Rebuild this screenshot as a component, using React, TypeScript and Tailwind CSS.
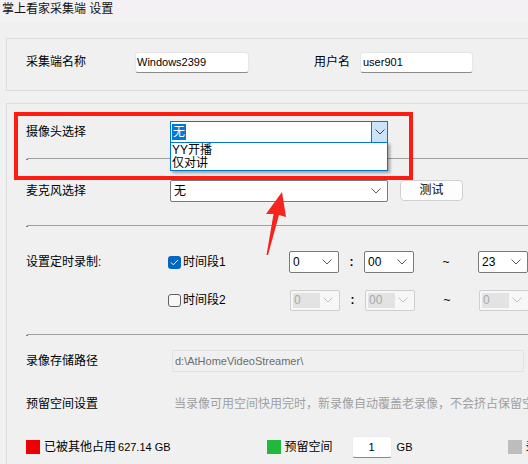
import React from 'react'

const Chevron = ({ color = '#5a5a5a' }: { color?: string }) => (
  <svg width="10" height="6" viewBox="0 0 10 6" fill="none">
    <polyline points="0.5,0.5 5,5 9.5,0.5" stroke={color} strokeWidth="1" />
  </svg>
)

function Combo({ value, w, disabled = false }: { value: string; w: string; disabled?: boolean }) {
  if (disabled) {
    return (
      <div className={`${w} h-[21px] flex items-center border border-[#cfcfcf] bg-[#f7f7f7] rounded-[2px] pl-[2px] pr-[6px]`}>
        <span className="h-[15px] w-[27px] bg-[#e3e3e3] text-[#a8a8a8] text-[12px] leading-[15px] pl-[1px]">{value}</span>
        <span className="ml-auto"><Chevron color="#c0c0c0" /></span>
      </div>
    )
  }
  return (
    <div className={`${w} h-[22px] flex items-center border border-[#7a7a7a] bg-white rounded-[2px] pl-[3px] pr-[6px]`}>
      <span className="text-[12px] leading-[20px] text-black">{value}</span>
      <span className="ml-auto"><Chevron /></span>
    </div>
  )
}

function Separator() {
  return (
    <div className="relative h-px">
      <div className="ml-px h-px bg-[#a0a0a0]" />
      <div className="absolute left-0 top-px w-[2px] h-px bg-[#7a7a7a]" />
    </div>
  )
}

function CheckBox({ checked }: { checked: boolean }) {
  if (checked) {
    return (
      <div className="w-[13px] h-[13px] rounded-[3px] bg-[#0067c0] flex items-center justify-center">
        <svg width="9" height="7" viewBox="0 0 9 7" fill="none">
          <polyline points="1,3.5 3.3,5.8 8,1" stroke="#ffffff" strokeWidth="1" />
        </svg>
      </div>
    )
  }
  return <div className="w-[13px] h-[13px] rounded-[3px] border border-[#5f5f5f] bg-[#f7f7f7]" />
}

export default function App() {
  return (
    <div className="relative w-[528px] h-[464px] overflow-hidden bg-[#f0f0f0] text-black font-['Liberation_Sans','Noto_Sans_CJK_SC',sans-serif] whitespace-nowrap">
      {/* title bar */}
      <div className="h-[22px] bg-[#f3f1f4] pl-[2px] text-[12px] leading-[18px] text-[#111]">掌上看家采集端 设置</div>

      {/* group 1 */}
      <div className="mt-[16px] ml-[6px] w-[600px] h-[53px] border-t border-l border-b border-[#dcdcdc] pl-[19px] pt-[13px] flex items-start">
        <span className="w-[109px] text-[12px] leading-[21px]">采集端名称</span>
        <div className="w-[114px] h-[21px] bg-white border border-[#e6e6e6] border-b-[#8a8a8a] rounded-[3px] pl-[1px] text-[11px] leading-[19px]">Windows2399</div>
        <span className="ml-[65px] w-[46px] text-[12px] leading-[21px]">用户名</span>
        <div className="w-[113px] h-[21px] bg-white border border-[#e6e6e6] border-b-[#8a8a8a] rounded-[3px] pl-[2px] text-[11px] leading-[19px]">user901</div>
      </div>

      {/* group 2 */}
      <div className="mt-[12px] ml-[6px] w-[640px] h-[400px] border-t border-l border-[#dcdcdc] pl-[19px] flex flex-col">
        {/* camera */}
        <div className="mt-[17px] h-[22px] flex items-center">
          <span className="w-[144px] text-[12px]">摄像头选择</span>
          <div className="relative w-[218px] h-[22px] flex items-center border border-[#0078d7] bg-white pl-[1px]">
            <span className="bg-[#0078d7] text-white text-[12px] leading-[16px] px-px">无</span>
            <div className="ml-auto h-full w-[16px] border-l border-[#0078d7] bg-[#cce4f7] flex items-center justify-center">
              <Chevron color="#404040" />
            </div>
            <div className="absolute left-[-1px] top-[20px] w-[218px] h-[29px] border border-[#0078d7] bg-white shadow-[2px_2px_3px_rgba(0,0,0,0.35)] z-10 flex flex-col pl-[1px] pt-[1px]">
              <span className="text-[12px] leading-[13px]">YY开播</span>
              <span className="text-[12px] leading-[13px]">仅对讲</span>
            </div>
          </div>
        </div>

        <div className="mt-[15px]"><Separator /></div>

        {/* microphone */}
        <div className="mt-[21px] h-[22px] flex items-center">
          <span className="w-[144px] text-[12px]">麦克风选择</span>
          <Combo value="无" w="w-[218px]" />
          <button className="ml-[12px] -mt-[2px] w-[63px] h-[21px] bg-[#fdfdfd] border border-[#d0d0d0] rounded-[4px] text-[12px] leading-[19px]">测试</button>
        </div>

        <div className="mt-[23px]"><Separator /></div>

        {/* schedule 1 */}
        <div className="mt-[25px] h-[22px] flex items-center">
          <span className="w-[142px] text-[12px]">设置定时录制:</span>
          <CheckBox checked />
          <span className="w-[106px] ml-[2px] text-[12px]">时间段1</span>
          <Combo value="0" w="w-[50px]" />
          <span className="w-[25px] text-center text-[12px] font-bold">:</span>
          <Combo value="00" w="w-[50px]" />
          <span className="w-[64px] text-center text-[12px]">~</span>
          <Combo value="23" w="w-[50px]" />
        </div>

        {/* schedule 2 */}
        <div className="mt-[16px] h-[22px] flex items-center">
          <span className="w-[142px]" />
          <CheckBox checked={false} />
          <span className="w-[107px] ml-[2px] text-[12px]">时间段2</span>
          <Combo value="0" w="w-[50px]" disabled />
          <span className="w-[25px] text-center text-[12px] font-bold">:</span>
          <Combo value="00" w="w-[50px]" disabled />
          <span className="w-[64px] text-center text-[12px]">~</span>
          <Combo value="0" w="w-[50px]" disabled />
        </div>

        <div className="mt-[23px]"><Separator /></div>

        {/* storage path */}
        <div className="mt-[15px] h-[22px] flex items-center">
          <span className="w-[146px] text-[12px]">录像存储路径</span>
          <div className="w-[352px] h-[22px] border border-[#e2e2e2] bg-[#f0f0f0] pl-[2px] text-[11px] leading-[20px] text-[#6d6d6d]">d:\AtHomeVideoStreamer\</div>
        </div>

        {/* reserve */}
        <div className="mt-[21px] h-[22px] flex items-center">
          <span className="w-[148px] text-[12px]">预留空间设置</span>
          <span className="text-[12px] text-[#a0a0a0]">当录像可用空间快用完时，新录像自动覆盖老录像，不会挤占保留空间</span>
        </div>

        {/* legend */}
        <div className="mt-[21px] h-[22px] flex items-center">
          <div className="w-[14px] h-[14px] bg-[#ee0000]" />
          <span className="ml-[4px] text-[12px]">已被其他占用</span>
          <span className="ml-[2px] text-[11px]">627.14 GB</span>
          <div className="ml-[96px] w-[14px] h-[14px] bg-[#22b83c]" />
          <span className="ml-[4px] w-[67px] text-[12px]">预留空间</span>
          <div className="w-[40px] h-[22px] bg-white border border-[#ececec] border-b-[#8a8a8a] rounded-[3px] text-center text-[11px] leading-[20px]">1</div>
          <span className="ml-[5px] w-[111px] text-[11px]">GB</span>
          <div className="w-[14px] h-[14px] bg-[#bdbdbd]" />
          <span className="ml-[4px] text-[12px]">录像可用</span>
        </div>
      </div>

      {/* annotation: red box and arrow */}
      <div className="absolute left-[14px] top-[112px] w-[399px] h-[68px] border-4 border-[#fe1b12] pointer-events-none" />
      <svg className="absolute left-0 top-0 pointer-events-none" width="528" height="464">
        <polygon points="282,192 286,217 279,215 268,255 266.5,255 273.5,214 266,214" fill="#f5241c" />
      </svg>
    </div>
  )
}
